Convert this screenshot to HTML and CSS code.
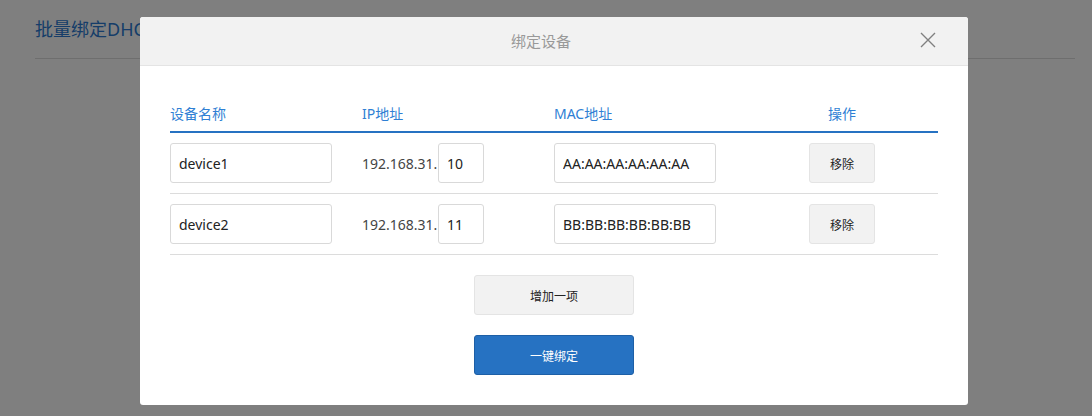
FILE: index.html
```html
<!DOCTYPE html>
<html lang="zh">
<head>
<meta charset="utf-8">
<title>绑定设备</title>
<link rel="stylesheet" href="styles.css">
</head>
<body>
<div class="page">
  <h1 class="page-title">批量绑定DHCP</h1>
</div>
<div class="shade"></div>
<div class="modal">
  <div class="modal-head">
    <span class="modal-title">绑定设备</span>
    <button class="modal-close" aria-label="关闭">
      <svg width="16" height="16" viewBox="0 0 16 16"><path d="M1 1L15 15M15 1L1 15" stroke="#808080" stroke-width="1.4" fill="none"/></svg>
    </button>
  </div>
  <div class="modal-body">
    <table class="grid">
      <thead>
        <tr>
          <th class="c-name">设备名称</th>
          <th class="c-ip">IP地址</th>
          <th class="c-mac">MAC地址</th>
          <th class="c-op">操作</th>
        </tr>
      </thead>
      <tbody>
        <tr>
          <td><input class="field field-name" value="device1"></td>
          <td><div class="ip-cell"><span class="ip-prefix">192.168.31.</span><input class="field field-ip" value="10"></div></td>
          <td><input class="field field-mac" value="AA:AA:AA:AA:AA:AA"></td>
          <td class="op"><button class="btn btn-remove">移除</button></td>
        </tr>
        <tr>
          <td><input class="field field-name" value="device2"></td>
          <td><div class="ip-cell"><span class="ip-prefix">192.168.31.</span><input class="field field-ip" value="11"></div></td>
          <td><input class="field field-mac" value="BB:BB:BB:BB:BB:BB"></td>
          <td class="op"><button class="btn btn-remove">移除</button></td>
        </tr>
      </tbody>
    </table>
    <div class="actions">
      <button class="btn btn-wide">增加一项</button>
      <button class="btn btn-wide btn-primary">一键绑定</button>
    </div>
  </div>
</div>
</body>
</html>
```

FILE: styles.css
```css
* { box-sizing: border-box; }
html, body {
  margin: 0;
  padding: 0;
  width: 1092px;
  height: 416px;
  overflow: hidden;
  background: #fff;
  font-family: "Noto Sans", "Noto Sans CJK SC", sans-serif;
}
.page {
  padding: 0 17px 0 35px;
}
.page-title {
  margin: 0;
  padding-top: 18px;
  height: 59px;
  line-height: 22px;
  font-size: 18px;
  font-weight: normal;
  color: #2c7bd2;
  border-bottom: 1px solid #dcdcdc;
  font-family: "Noto Sans", "Noto Sans CJK SC", sans-serif;
}
.shade {
  position: fixed;
  inset: 0;
  background: rgba(0, 0, 0, 0.5);
}
.modal {
  position: absolute;
  left: 140px;
  top: 17px;
  width: 828px;
  height: 388px;
  background: #fff;
  border-radius: 3px;
  overflow: hidden;
}
.modal-head {
  height: 49px;
  background: #f2f2f2;
  border-bottom: 1px solid #e4e4e4;
  display: flex;
  align-items: center;
  justify-content: center;
  padding: 0 26px 0 0;
  position: relative;
}
.modal-title {
  font-size: 15px;
  color: #999;
  line-height: 20px;
  font-family: "Noto Sans CJK SC", sans-serif;
}
.modal-close {
  position: absolute;
  right: 32px;
  top: 15px;
  width: 16px;
  height: 16px;
  padding: 0;
  border: 0;
  background: transparent;
  display: block;
}
.modal-close svg { display: block; }
.modal-body {
  padding: 38px 30px 30px;
}
.grid {
  width: 768px;
  border-collapse: collapse;
  table-layout: fixed;
}
.grid th {
  text-align: left;
  font-weight: normal;
  font-size: 14px;
  line-height: 20px;
  color: #2f7fd4;
  padding: 0 0 7px;
  border-bottom: 2px solid #2672c2;
  width: 192px;
}
.grid th.c-op {
  text-align: center;
}
.grid td {
  padding: 10px 0;
  height: 61px;
  border-bottom: 1px solid #dcdcdc;
  font-size: 14px;
  color: #333;
  vertical-align: middle;
}
.grid td.op {
  text-align: center;
}
.ip-cell {
  display: flex;
  align-items: center;
}
.field {
  height: 40px;
  border: 1px solid #d9d9d9;
  border-radius: 3px;
  padding: 0 8px;
  font-size: 14px;
  color: #222;
  font-family: "Noto Sans", "Noto Sans CJK SC", sans-serif;
  background: #fff;
  outline: none;
  display: block;
  margin: 0;
}
.field-name, .field-mac { width: 162px; }
.field-ip { width: 46px; }
.ip-prefix {
  color: #444;
  font-size: 14px;
  width: 76px;
  flex: none;
}
.btn {
  font-family: "Noto Sans CJK SC", sans-serif;
  font-size: 12px;
  color: #222;
  background: #f2f2f2;
  border: 1px solid #e4e4e4;
  border-radius: 3px;
  height: 40px;
  padding: 0;
  margin: 0;
  cursor: pointer;
}
.btn-remove {
  width: 66px;
  display: inline-block;
  vertical-align: middle;
}
.actions {
  display: flex;
  flex-direction: column;
  align-items: center;
  gap: 20px;
  padding-top: 20px;
}
.btn-wide {
  width: 160px;
}
.btn-primary {
  background: #2672c2;
  border-color: #1d5fa6;
  color: #fff;
}
```
